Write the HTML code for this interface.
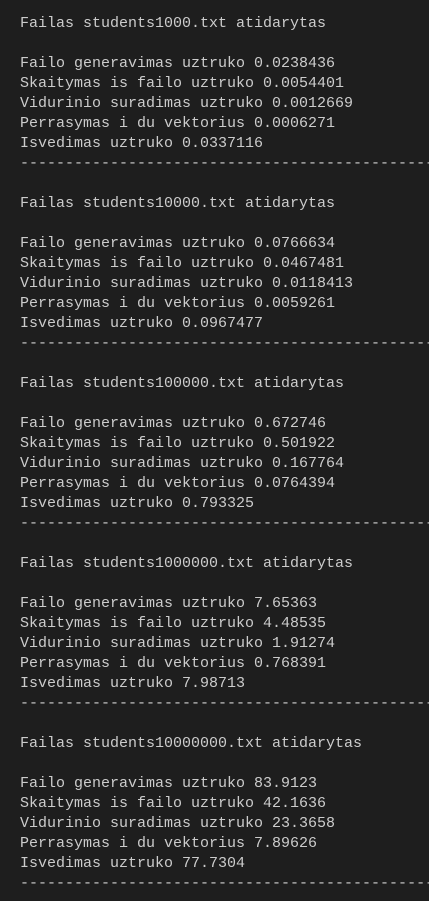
<!DOCTYPE html>
<html><head><style>
html,body{margin:0;padding:0;background:#1e1e1e;width:429px;height:901px;overflow:hidden}
pre{margin:0;padding:14px 0 0 20px;width:409px;overflow:hidden;font-family:"Liberation Mono",monospace;font-size:15px;line-height:20px;color:#cccccc;white-space:pre}
</style></head><body><pre>Failas students1000.txt atidarytas

Failo generavimas uztruko 0.0238436
Skaitymas is failo uztruko 0.0054401
Vidurinio suradimas uztruko 0.0012669
Perrasymas i du vektorius 0.0006271
Isvedimas uztruko 0.0337116
------------------------------------------------

Failas students10000.txt atidarytas

Failo generavimas uztruko 0.0766634
Skaitymas is failo uztruko 0.0467481
Vidurinio suradimas uztruko 0.0118413
Perrasymas i du vektorius 0.0059261
Isvedimas uztruko 0.0967477
------------------------------------------------

Failas students100000.txt atidarytas

Failo generavimas uztruko 0.672746
Skaitymas is failo uztruko 0.501922
Vidurinio suradimas uztruko 0.167764
Perrasymas i du vektorius 0.0764394
Isvedimas uztruko 0.793325
------------------------------------------------

Failas students1000000.txt atidarytas

Failo generavimas uztruko 7.65363
Skaitymas is failo uztruko 4.48535
Vidurinio suradimas uztruko 1.91274
Perrasymas i du vektorius 0.768391
Isvedimas uztruko 7.98713
------------------------------------------------

Failas students10000000.txt atidarytas

Failo generavimas uztruko 83.9123
Skaitymas is failo uztruko 42.1636
Vidurinio suradimas uztruko 23.3658
Perrasymas i du vektorius 7.89626
Isvedimas uztruko 77.7304
------------------------------------------------</pre></body></html>
